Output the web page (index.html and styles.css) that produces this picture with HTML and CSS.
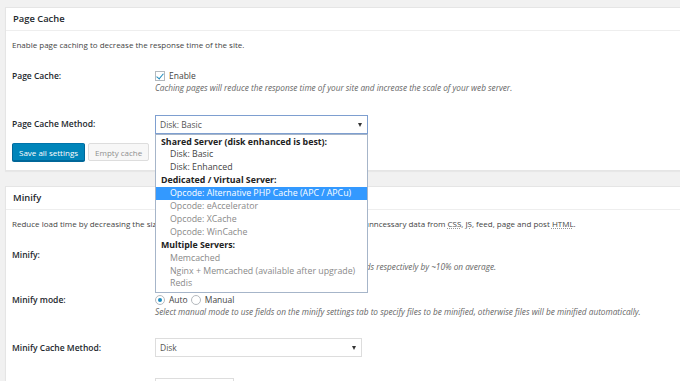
FILE: index.html
```html
<!DOCTYPE html>
<html lang="en">
<head>
  <meta charset="UTF-8">
  <title>Page Cache Settings</title>
  <link rel="stylesheet" href="styles.css">
</head>
<body>
  <div class="page">
    <div class="postbox">
      <h3 class="hndle">Page Cache</h3>
      <div class="inside">
        <p class="intro">Enable page caching to decrease the response time of the site.</p>
        <div class="form-row">
          <div class="label">Page Cache:</div>
          <div class="field">
            <div class="line">
              <label class="check"><span class="box checked"></span>Enable</label>
            </div>
            <p class="desc">Caching pages will reduce the response time of your site and increase the scale of your web server.</p>
          </div>
        </div>
        <div class="form-row center">
          <div class="label">Page Cache Method:</div>
          <div class="field">
            <div class="select focus">
              Disk: Basic<span class="arrow"></span>
              <ul class="dropdown">
                <li class="group">Shared Server (disk enhanced is best):</li>
                <li class="opt">Disk: Basic</li>
                <li class="opt">Disk: Enhanced</li>
                <li class="group">Dedicated / Virtual Server:</li>
                <li class="opt selected">Opcode: Alternative PHP Cache (APC / APCu)</li>
                <li class="opt disabled">Opcode: eAccelerator</li>
                <li class="opt disabled">Opcode: XCache</li>
                <li class="opt disabled">Opcode: WinCache</li>
                <li class="group">Multiple Servers:</li>
                <li class="opt disabled">Memcached</li>
                <li class="opt disabled">Nginx + Memcached (available after upgrade)</li>
                <li class="opt disabled">Redis</li>
              </ul>
            </div>
          </div>
        </div>
        <div class="actions">
          <button class="button-primary">Save all settings</button>
          <button class="button" disabled>Empty cache</button>
        </div>
      </div>
    </div>

    <div class="postbox">
      <h3 class="hndle">Minify</h3>
      <div class="inside">
        <p class="intro">Reduce load time by decreasing the size and number of <abbr>CSS</abbr> and <abbr>JS</abbr> files. Automatically remove unncessary data from <abbr>CSS</abbr>, <abbr>JS</abbr>, feed, page and post <abbr>HTML</abbr>.</p>
        <div class="form-row">
          <div class="label">Minify:</div>
          <div class="field">
            <div class="line">
              <label class="check"><span class="box checked"></span>Enable</label>
            </div>
            <p class="desc">Minification can decrease file size of <abbr>HTML</abbr>, <abbr>CSS</abbr>, <abbr>JS</abbr> and feeds respectively by ~10% on average.</p>
          </div>
        </div>
        <div class="form-row">
          <div class="label">Minify mode:</div>
          <div class="field">
            <div class="line">
              <label class="check"><span class="radio checked"></span>Auto</label>
              <label class="check"><span class="radio"></span>Manual</label>
            </div>
            <p class="desc">Select manual mode to use fields on the minify settings tab to specify files to be minified, otherwise files will be minified automatically.</p>
          </div>
        </div>
        <div class="form-row center">
          <div class="label">Minify Cache Method:</div>
          <div class="field">
            <div class="select small">Disk<span class="arrow"></span></div>
          </div>
        </div>
        <div class="form-row">
          <div class="label"></div>
          <div class="field">
            <div class="text-input"></div>
          </div>
        </div>
      </div>
    </div>
  </div>
</body>
</html>
```

FILE: styles.css
```css
body {
    margin: 0;
    background: #f1f1f1;
    font-family: "Open Sans", "Noto Sans", sans-serif;
    font-size: 8px;
    color: #444;
}
.page {
    padding: 7px 0 0 5px;
    height: 381px;
    overflow: hidden;
    box-sizing: border-box;
}
.postbox {
    background: #fff;
    border: 1px solid #e5e5e5;
    margin-right: -4px;
    margin-bottom: 15px;
    box-shadow: 0 1px 1px rgba(0, 0, 0, 0.04);
}
.hndle {
    margin: 0;
    height: 22px;
    line-height: 22px;
    padding: 0 7px;
    font-size: 9.4px;
    font-weight: 600;
    color: #23282d;
    border-bottom: 1px solid #eee;
}
.inside {
    padding: 8px 6px 9px;
}
.intro {
    margin: 0 0 9px;
    line-height: 12px;
}
abbr {
    text-decoration: underline dotted #999;
}
.form-row {
    display: grid;
    grid-template-columns: 143px 1fr;
    padding: 10px 0 10.5px;
}
.form-row.center {
    align-items: center;
}
.label {
    font-size: 8.5px;
    font-weight: 600;
    color: #23282d;
    line-height: 12px;
}
.field {
    line-height: 12px;
}
.line {
    display: flex;
    align-items: center;
    height: 12px;
    gap: 3px;
}
.check {
    display: flex;
    align-items: center;
    gap: 4px;
    font-size: 8.5px;
    color: #444;
}
.box {
    width: 8px;
    height: 8px;
    border: 1px solid #b4b9be;
    background: #fff;
    position: relative;
}
.box.checked::after {
    content: "";
    position: absolute;
    left: 2px;
    top: 0;
    width: 3px;
    height: 6px;
    border: solid #1e8cbe;
    border-width: 0 1.5px 1.5px 0;
    transform: rotate(40deg);
}
.radio {
    width: 8px;
    height: 8px;
    border: 1px solid #b4b9be;
    border-radius: 50%;
    background: #fff;
    display: flex;
    align-items: center;
    justify-content: center;
}
.radio.checked::after {
    content: "";
    width: 4px;
    height: 4px;
    border-radius: 50%;
    background: #1e8cbe;
}
.desc {
    margin: 0;
    font-size: 8.25px;
    font-style: italic;
    color: #666;
}
.select {
    position: relative;
    width: 213px;
    height: 19px;
    box-sizing: border-box;
    border: 1px solid #ddd;
    padding: 0 4px;
    font-size: 8.5px;
    line-height: 17px;
    color: #555;
    background: #fff;
}
.select.focus {
    border-color: #7e9fd0;
}
.select.small {
    width: 207px;
}
.arrow {
    position: absolute;
    right: 5px;
    top: 7px;
    border-left: 2.5px solid transparent;
    border-right: 2.5px solid transparent;
    border-top: 4px solid #333;
}
.dropdown {
    position: absolute;
    left: -1px;
    top: 18px;
    width: 211px;
    margin: 0;
    padding: 1px 0 2px;
    list-style: none;
    background: #fff;
    border: 1px solid #a6b5c9;
    font-size: 8.8px;
    line-height: 12.9px;
    z-index: 2;
}
.dropdown .group {
    font-weight: 700;
    color: #222;
    padding-left: 5px;
}
.dropdown .opt {
    padding-left: 14px;
    color: #444;
}
.dropdown .disabled {
    color: #8a8a8a;
}
.dropdown .selected {
    background: #3399ff;
    color: #fff;
}
.actions {
    display: flex;
    gap: 3px;
    margin-top: -1px;
}
.button-primary, .button {
    height: 18px;
    padding: 0 6px;
    font-family: inherit;
    font-size: 8px;
    border-radius: 2px;
    border: 1px solid;
}
.button-primary {
    background: #0085ba;
    border-color: #0073aa #006799 #006799;
    color: #fff;
    box-shadow: 0 1px 0 #006799;
}
.button {
    background: #f7f7f7;
    border-color: #ddd;
    color: #8f8f8f;
}
.text-input {
    width: 79px;
    height: 19px;
    box-sizing: border-box;
    border: 1px solid #ddd;
}
```
